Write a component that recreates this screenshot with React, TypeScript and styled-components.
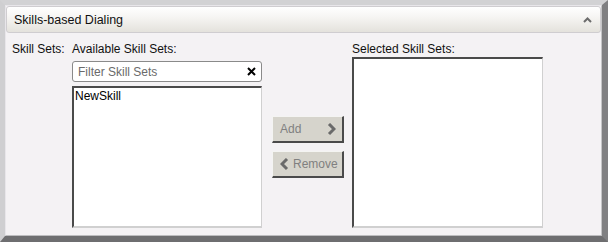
import styled, { createGlobalStyle } from "styled-components";

const GlobalStyle = createGlobalStyle`
  html, body {
    margin: 0;
    padding: 0;
    background: #d0d0d0;
  }
  body {
    font-family: Tahoma, "Liberation Sans", Arial, sans-serif;
    font-size: 12px;
  }
`

const Frame = styled.div`
  width: 608px;
  height: 242px;
  box-sizing: border-box;
  border-top: 5px solid #d2d2d4;
  border-left: 5px solid #cfcfd1;
  border-right: 6px solid #808082;
  border-bottom: 6px solid #6e6e70;
  background: #f4f2f4;
  display: flex;
  flex-direction: column;
`

const Panel = styled.div`
  flex: 1;
  display: flex;
  flex-direction: column;
  border: 1px solid #e8e6ea;
  border-right-color: #c4c4c6;
  border-bottom-color: #bdbdbf;
  background: #f4f2f4;
`

const Header = styled.div`
  height: 25px;
  display: flex;
  align-items: center;
  justify-content: space-between;
  padding: 0 8px 0 7px;
  border: 1px solid #cfcdd0;
  border-radius: 3px;
  background: linear-gradient(to bottom, #ffffff 0%, #f6f5f3 40%, #e4e2dc 100%);
  color: #101010;
  font-size: 12.5px;
`

const Body = styled.div`
  flex: 1;
  display: flex;
  padding: 9px 0 7px 6px;
`

const Label = styled.div<{ $width?: number }>`
  color: #101010;
  font-size: 12px;
  line-height: 14px;
  height: 14px;
  ${(p) => (p.$width ? `width: ${p.$width}px;` : "")}
`

const Column = styled.div<{ $width: number; $gap?: number }>`
  width: ${(p) => p.$width}px;
  display: flex;
  flex-direction: column;
  gap: ${(p) => p.$gap ?? 0}px;
`

const FilterBox = styled.div`
  margin: 5px 0 4px;
  height: 19px;
  display: flex;
  align-items: center;
  justify-content: space-between;
  padding: 0 5px 0 5px;
  border: 1px solid #8a8a8a;
  border-radius: 3px;
  background: #ffffff;
  color: #6a6a6a;
  font-size: 12px;
`

const ListBox = styled.div`
  flex: 1;
  box-sizing: border-box;
  background: #ffffff;
  border-top: 2px solid #4a4a4a;
  border-left: 2px solid #4a4a4a;
  border-right: 1px solid #d0d0d0;
  border-bottom: 2px solid #d0d0d0;
  padding: 1px 1px;
  font-size: 12px;
  color: #000;
  line-height: 14px;
`

const ButtonColumn = styled.div`
  width: 72px;
  margin: 0 8px 0 10px;
  padding-top: 74px;
  display: flex;
  flex-direction: column;
  gap: 8px;
`

const SideButton = styled.button<{ $spread?: boolean }>`
  height: 27px;
  box-sizing: border-box;
  display: flex;
  align-items: center;
  justify-content: ${(p) => (p.$spread ? "space-between" : "flex-start")};
  gap: 4px;
  padding: 0 6px 0 7px;
  background: #d6d4cc;
  border-top: 1px solid #f4f4f2;
  border-left: 1px solid #f4f4f2;
  border-right: 2px solid #4a4a4a;
  border-bottom: 2px solid #4a4a4a;
  color: #808080;
  font-family: inherit;
  font-size: 12px;
  white-space: nowrap;

  svg {
    flex-shrink: 0;
  }
`

const Chevron = ({ dir }: { dir: "up" | "left" | "right" }) => {
  if (dir === "up")
    return (
      <svg width="9" height="6" viewBox="0 0 9 6">
        <polyline points="1,5 4.5,1.5 8,5" fill="none" stroke="#6c6c6c" strokeWidth="2" />
      </svg>
    )
  const pts = dir === "right" ? "2,1 7,6 2,11" : "7,1 2,6 7,11"
  return (
    <svg width="9" height="13" viewBox="0 0 9 13">
      <polyline points={pts} fill="none" stroke="#6a6a6a" strokeWidth="3" strokeLinejoin="miter" />
    </svg>
  )
}

const ClearIcon = () => (
  <svg width="9" height="9" viewBox="0 0 9 9">
    <path d="M1 1 L8 8 M8 1 L1 8" stroke="#000" strokeWidth="2" />
  </svg>
)

export default function App() {
  return (
    <Frame>
      <GlobalStyle />
      <Panel>
        <Header>
          <span>Skills-based Dialing</span>
          <Chevron dir="up" />
        </Header>
        <Body>
          <Label $width={60}>Skill Sets:</Label>
          <Column $width={190}>
            <Label>Available Skill Sets:</Label>
            <FilterBox>
              <span>Filter Skill Sets</span>
              <ClearIcon />
            </FilterBox>
            <ListBox>NewSkill</ListBox>
          </Column>
          <ButtonColumn>
            <SideButton disabled $spread>
              <span>Add</span>
              <Chevron dir="right" />
            </SideButton>
            <SideButton disabled>
              <Chevron dir="left" />
              <span>Remove</span>
            </SideButton>
          </ButtonColumn>
          <Column $width={191} $gap={1}>
            <Label>Selected Skill Sets:</Label>
            <ListBox />
          </Column>
        </Body>
      </Panel>
    </Frame>
  )
}
